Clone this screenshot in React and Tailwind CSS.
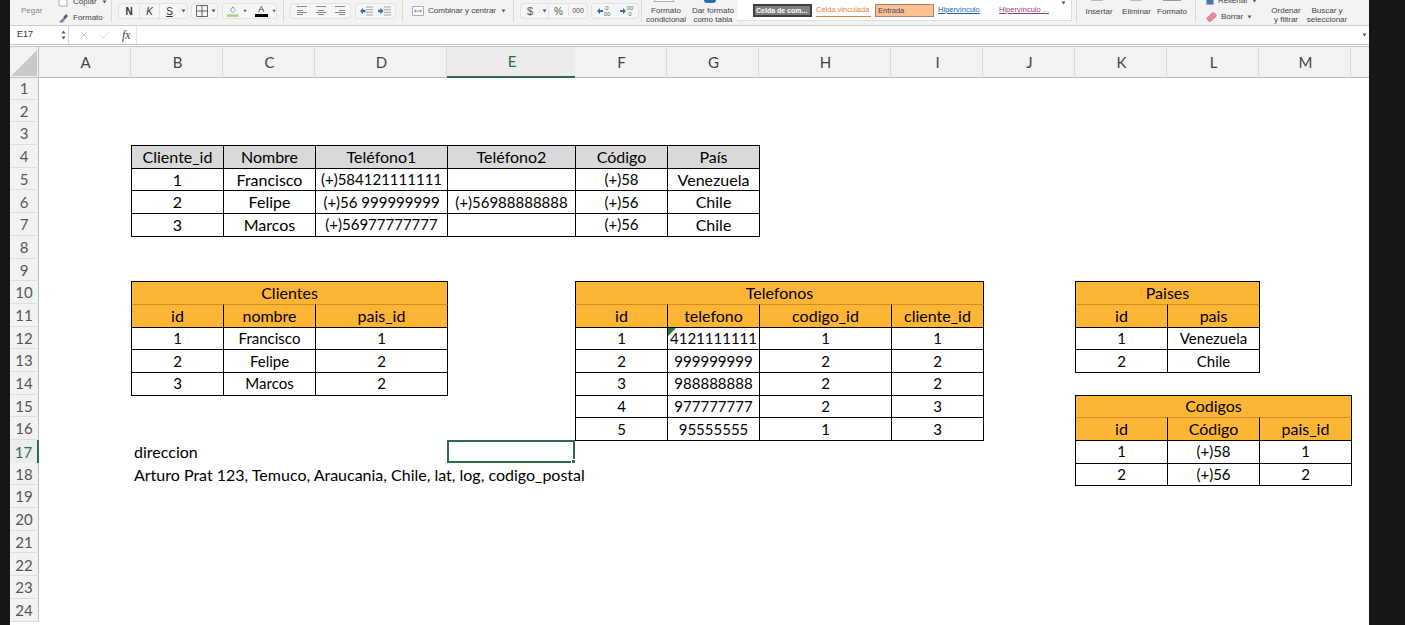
const sheetFont = { fontFamily: 'Lato, sans-serif' }

const columns = ['A', 'B', 'C', 'D', 'E', 'F', 'G', 'H', 'I', 'J', 'K', 'L', 'M']
const rowNumbers = Array.from({ length: 24 }, (_, i) => i + 1)

const Sep = ({ className = '' }) => <div className={`h-[22px] w-px shrink-0 bg-[#d9d9d9] ${className}`} />

const Caret = ({ className = '' }) => (
	<svg width="5" height="4" viewBox="0 0 5 4" className={className}>
		<path d="M0.5 0.5h4L2.5 3.5z" fill="#555" />
	</svg>
)

const Lines = ({ align }) => {
	const short = { left: 'M1 5.5h6M1 9.5h6', center: 'M3 5.5h6M3 9.5h6', right: 'M5 5.5h6M5 9.5h6' }
	return (
		<svg width="12" height="12" viewBox="0 0 12 12">
			<path d="M1 1.5h10M1 7.5h10" stroke="#8a8a8a" strokeWidth="1" />
			<path d={short[align]} stroke="#8a8a8a" strokeWidth="1" />
		</svg>
	)
}

const Indent = ({ flip }) => (
	<svg width="13" height="10" viewBox="0 0 13 10">
		<path d="M6 1h7M6 3.7h7M6 6.3h7M6 9h7" stroke="#9a9a9a" strokeWidth="0.9" />
		{flip ? <path d="M0 3.8h2.5V2L5.5 5 2.5 8V6.2H0z" fill="#2f6fb5" /> : <path d="M5.5 3.8H3V2L0 5l3 3V6.2h2.5z" fill="#2f6fb5" />}
	</svg>
)

const Group = ({ className = '', children }) => (
	<div className={`flex h-[16px] shrink-0 items-center rounded-[3px] border border-[#e3e3e3] bg-[#f6f6f6] ${className}`}>{children}</div>
)

const Decimal = ({ top, bottom, flip }) => (
	<div className="flex w-1/2 items-center justify-center gap-px text-[6px] leading-[6px] text-[#666]">
		<svg width="6" height="6" viewBox="0 0 6 6">
			{flip ? <path d="M0 2h3V0l3 3-3 3V4H0z" fill="#2f6fb5" /> : <path d="M6 2H3V0L0 3l3 3V4h3z" fill="#2f6fb5" />}
		</svg>
		<div className="flex flex-col items-center">
			<span>{top}</span>
			<span>{bottom}</span>
		</div>
	</div>
)

const BigLabel = ({ width, className = '', children, top }) => (
	<div className={`relative flex shrink-0 flex-col items-center whitespace-nowrap pt-[6px] text-[8px] leading-[9px] text-[#444] ${width} ${className}`}>
		{top}
		{children}
	</div>
)

const Ribbon = () => (
	<div className="flex h-[26px] overflow-hidden border-b border-[#cfcfcf] bg-[#f3f3f3] pt-[3px]" style={{ fontFamily: '"Liberation Sans", sans-serif' }}>
		<div className="w-[48px] shrink-0 pl-[11px] pt-[4px] text-[8px] leading-[8px] text-[#888]">Pegar</div>
		<div className="-mt-[6px] flex w-[53px] shrink-0 flex-col gap-[6px] text-[8px] leading-[8px] text-[#444]">
			<div className="flex items-center gap-[5px]">
				<svg width="10" height="10" viewBox="0 0 10 10" className="shrink-0">
					<path d="M1 1h5l3 3v5H1z" fill="#fff" stroke="#999" strokeWidth="0.8" />
				</svg>
				<span>Copiar</span>
				<Caret />
			</div>
			<div className="flex items-center gap-[4px]">
				<svg width="11" height="10" viewBox="0 0 11 10" className="shrink-0">
					<path d="M1 9l4-4 2 2-3 3z" fill="#7d8a99" />
					<path d="M5 4.500l3-3.500 2 2-3 3.500z" fill="#4f5f73" />
				</svg>
				<span>Formato</span>
			</div>
		</div>
		<Sep className="-mt-[3px]" />
		<Group className="ml-[6px] w-[70px] text-[10px] text-[#333]">
			<div className="w-[20px] text-center font-bold">N</div>
			<div className="w-[20px] border-l border-[#e3e3e3] text-center italic">K</div>
			<div className="w-[20px] border-l border-[#e3e3e3] text-center underline">S</div>
			<div className="flex w-[8px] justify-center border-l border-[#e3e3e3]">
				<Caret />
			</div>
		</Group>
		<Group className="ml-[3px] w-[27px] gap-[3px] pl-[4px]">
			<svg width="12" height="12" viewBox="0 0 12 12">
				<path d="M0.500 0.500h11v11h-11zM6 0.500v11M0.500 6h11" fill="none" stroke="#444" strokeWidth="0.8" />
			</svg>
			<Caret />
		</Group>
		<Group className="ml-[4px] w-[55px] pl-[4px]">
			<svg width="14" height="14" viewBox="0 0 14 14">
				<path d="M4 6l3-4 3 4-3 3z" fill="#fff" stroke="#3b7fc4" strokeWidth="0.9" />
				<rect x="0" y="11" width="14" height="3" fill="#a9d18e" />
			</svg>
			<Caret className="ml-[4px]" />
			<div className="ml-[8px] flex w-[13px] flex-col items-center text-[9px] leading-[9px] text-[#333]">
				<span>A</span>
				<div className="h-[3px] w-[13px] bg-black" />
			</div>
			<Caret className="ml-[4px]" />
		</Group>
		<Sep className="-mt-[3px] ml-[6px]" />
		<Group className="ml-[6px] w-[61px] justify-around px-[1px]">
			<Lines align="left" />
			<Lines align="center" />
			<Lines align="right" />
		</Group>
		<Group className="ml-[4px] w-[41px] justify-around px-[2px]">
			<Indent />
			<Indent flip />
		</Group>
		<Sep className="-mt-[3px] ml-[6px]" />
		<div className="ml-[9px] flex h-[16px] w-[101px] shrink-0 items-center text-[8px] text-[#444]">
			<svg width="12" height="12" viewBox="0 0 12 12" className="mr-[4px] shrink-0">
				<path d="M0.500 1.500h11v9h-11z" fill="#fff" stroke="#999" strokeWidth="0.8" />
				<path d="M2.500 6h7M2.500 6l1.500-1.200M2.500 6l1.500 1.200M9.500 6L8 4.800M9.500 6L8 7.200" stroke="#3b7fc4" strokeWidth="0.8" fill="none" />
			</svg>
			<span className="whitespace-nowrap">Combinar y centrar</span>
			<Caret className="ml-[5px]" />
		</div>
		<Sep className="-mt-[3px]" />
		<Group className="ml-[6px] w-[68px] text-[#555]">
			<div className="w-[18px] text-center text-[11px]">$</div>
			<div className="flex w-[9px] justify-center border-l border-[#e3e3e3]">
				<Caret />
			</div>
			<div className="w-[20px] border-l border-[#e3e3e3] text-center text-[10px]">%</div>
			<div className="w-[19px] border-l border-[#e3e3e3] text-center text-[7px]">000</div>
		</Group>
		<Group className="ml-[3px] w-[48px]">
			<Decimal top="0" bottom="00" />
			<Decimal top="00" bottom="0" flip />
		</Group>
		<Sep className="-mt-[3px] ml-[2px]" />
		<BigLabel width="w-[48px]" className="-mt-[3px]" top={<div className="absolute left-[12px] top-0 h-[2px] w-[20px] border-x border-b border-[#aaa] bg-white" />}>
			<span>Formato</span>
			<span>condicional</span>
		</BigLabel>
		<BigLabel width="w-[46px]" className="-mt-[3px]" top={<div className="absolute left-[14px] top-0 h-[3px] w-[12px] rounded-b-full bg-[#2e6cb0]" />}>
			<span>Dar formato</span>
			<span>como tabla</span>
		</BigLabel>
		<div className="-mt-[3px] ml-[1px] flex h-[21px] w-[335px] shrink-0 items-start border-b border-r border-[#dcdcdc] bg-white pl-[16px] pt-[4px] text-[7.500px] leading-[12px]">
			<div className="h-[13px] w-[59px] shrink-0 truncate border-2 border-[#3f3f3f] bg-[#7f7f7f] px-px text-[7px] leading-[9px] font-bold text-white">Celda de com...</div>
			<div className="ml-[4px] w-[55px] shrink-0 whitespace-nowrap border-b border-[#e8833a] text-[#e8833a]">Celda vinculada</div>
			<div className="ml-[4px] h-[13px] w-[59px] shrink-0 border border-[#a9846a] bg-[#fbc08f] pl-[2px] text-[#3f3f76]">Entrada</div>
			<div className="ml-[4px] w-[43px] shrink-0 text-[#1f5fb0] underline">Hipervínculo</div>
			<div className="ml-[18px] w-[51px] shrink-0 whitespace-nowrap text-[#8f3f7c] underline">Hipervínculo ...</div>
			<Caret className="ml-[11px] -mt-[3px]" />
		</div>
		<Sep className="-mt-[3px] ml-[4px]" />
		<BigLabel width="w-[44px]" className="-mt-[3px] pt-[7px]" top={<div className="absolute left-[14px] top-0 h-px w-[12px] bg-[#bbb]" />}>
			<span>Insertar</span>
		</BigLabel>
		<BigLabel width="w-[31px]" className="-mt-[3px] pt-[7px]" top={<div className="absolute left-[9px] top-0 h-px w-[12px] bg-[#bbb]" />}>
			<span>Eliminar</span>
		</BigLabel>
		<BigLabel width="w-[40px]" className="-mt-[3px] pt-[7px]" top={<div className="absolute left-[11px] top-0 h-px w-[18px] bg-[#999]" />}>
			<span>Formato</span>
		</BigLabel>
		<Sep className="-mt-[3px] ml-[3px]" />
		<div className="-mt-[6px] ml-[10px] flex w-[62px] shrink-0 flex-col gap-[7px] text-[8px] leading-[8px] text-[#444]">
			<div className="flex items-center gap-[4px]">
				<div className="h-[8px] w-[8px] rounded-[1px] border border-[#aaa] bg-[#3f78bd]" />
				<span>Rellenar</span>
				<Caret />
			</div>
			<div className="flex items-center gap-[4px]">
				<svg width="11" height="10" viewBox="0 0 11 10" className="shrink-0">
					<path d="M0.500 6.500L6 1a1.500 1.500 0 0 1 2 0l2 1.500a1.500 1.500 0 0 1 0 2L4.500 9.500H3z" fill="#e98a9a" stroke="#b85f70" strokeWidth="0.5" />
				</svg>
				<span>Borrar</span>
				<Caret />
			</div>
		</div>
		<BigLabel width="w-[36px]" className="-mt-[3px]">
			<span>Ordenar</span>
			<span>y filtrar</span>
		</BigLabel>
		<BigLabel width="w-[46px]" className="-mt-[3px]">
			<span>Buscar y</span>
			<span>seleccionar</span>
		</BigLabel>
	</div>
)

const FormulaBar = () => (
	<div className="flex h-[19px] items-stretch border-b border-[#c4c4c4] bg-white">
		<div className="flex w-[59px] shrink-0 items-center justify-between border-r border-[#d5d5d5] pl-[7px] pr-[2px] text-[9px] text-[#333]" style={{ fontFamily: '"Liberation Sans", sans-serif' }}>
			<span>E17</span>
			<div className="flex flex-col gap-[2px]">
				<Caret className="rotate-180" />
				<Caret />
			</div>
		</div>
		<div className="flex w-[68px] shrink-0 items-center border-r border-[#e5e5e5] pl-[11px]">
			<svg width="8" height="8" viewBox="0 0 8 8">
				<path d="M1 1l6 6M7 1L1 7" stroke="#cfcfcf" strokeWidth="1" />
			</svg>
			<svg width="11" height="8" viewBox="0 0 11 8" className="ml-[11px]">
				<path d="M1 4l3 3 6-6" fill="none" stroke="#d5d5d5" strokeWidth="1" />
			</svg>
			<span className="ml-[12px] text-[12px] italic text-[#444]" style={{ fontFamily: '"Liberation Serif", serif' }}>fx</span>
		</div>
		<div className="flex flex-1 items-center justify-end pr-[2px]">
			<Caret />
		</div>
	</div>
)

const Cell = ({ className = '', bg = 'bg-white', children }) => {
	const numeric = /^[(+)\d ]{5,}$/.test(children?.toString?.() ?? '') || Array.isArray(children)
	return (
		<div
			className={`relative -mb-px -mr-px flex items-center justify-center whitespace-nowrap border border-black leading-none text-black ${numeric ? 'text-[15px]' : 'text-[16px]'} ${bg} ${className}`}
		>
			{children}
		</div>
	)
}

const topRows = [
	['1', 'Francisco', '(+)584121111111', '', '(+)58', 'Venezuela'],
	['2', 'Felipe', '(+)56 999999999', '(+)56988888888', '(+)56', 'Chile'],
	['3', 'Marcos', '(+)56977777777', '', '(+)56', 'Chile'],
]

const Table = ({ place, title, titleSpan, head, rows, marker }) => (
	<div className={`z-10 grid grid-cols-subgrid grid-rows-subgrid ${place}`}>
		<Cell bg="bg-[#fdb535]" className={titleSpan}>
			{title}
		</Cell>
		{head.map((h) => (
			<Cell key={h} bg="bg-[#fdb535]" className="border-t-[#c98f26]">
				{h}
			</Cell>
		))}
		{rows.flat().map((v, i) => (
			<Cell key={i}>
				{marker && i === 1 && <div className="absolute left-0 top-0 h-0 w-0 border-r-[8px] border-t-[8px] border-r-transparent border-t-[#1f7a3d]" />}
				{v}
			</Cell>
		))}
	</div>
)

const Sheet = () => (
	<div
		className="grid flex-1 grid-cols-[29px_92px_92px_92px_132px_128px_92px_92px_132px_92px_92px_92px_92px_92px_18px] grid-rows-[30px_repeat(24,22.7px)] bg-white"
		style={sheetFont}
	>
		<div className="z-[5] -mb-px flex items-end justify-end border-b border-r border-[#bdbdbd] bg-[#f2f2f2] p-[1px]">
			<div className="h-0 w-0 border-b-[26px] border-l-[26px] border-b-[#c9c9c9] border-l-transparent" />
		</div>
		{columns.map((c) => (
			<div
				key={c}
				className={
					c === 'E'
						? 'z-[5] -mb-px flex items-center justify-center border-b-2 border-[#2e6b4a] bg-[#ececec] pl-[2px] text-[15px] text-[#2e6b4a]'
						: 'z-[5] -mb-px flex items-center justify-center border-b border-r border-b-[#bdbdbd] border-r-[#dcdcdc] bg-[#f2f2f2] pl-[2px] text-[15px] text-[#444]'
				}
			>
				{c}
			</div>
		))}
		<div className="z-[5] -mb-px border-b border-[#bdbdbd] bg-[#f2f2f2]" />
		{rowNumbers.map((n) => (
			<div
				key={n}
				className={
					n === 17
						? 'col-start-1 flex items-center justify-center border-r-2 border-[#2e6b4a] bg-[#ececec] pt-px text-[15px] text-[#2e6b4a]'
						: 'col-start-1 flex items-center justify-center border-b border-r border-b-[#dedede] border-r-[#bdbdbd] bg-[#f2f2f2] pt-px text-[15px] text-[#555]'
				}
			>
				{n}
			</div>
		))}

		<div className="z-10 col-start-3 col-end-9 row-start-5 row-end-9 grid grid-cols-subgrid grid-rows-subgrid">
			{['Cliente_id', 'Nombre', 'Teléfono1', 'Teléfono2', 'Código', 'País'].map((h) => (
				<Cell key={h} bg="bg-[#d9d9d9]">
					{h}
				</Cell>
			))}
			{topRows.flat().map((v, i) => (
				<Cell key={i}>{v}</Cell>
			))}
		</div>

		<Table
			place="col-start-3 col-end-6 row-start-11 row-end-16"
			title="Clientes"
			titleSpan="col-span-3"
			head={['id', 'nombre', 'pais_id']}
			rows={[
				['1', 'Francisco', '1'],
				['2', 'Felipe', '2'],
				['3', 'Marcos', '2'],
			]}
		/>
		<Table
			place="col-start-7 col-end-11 row-start-11 row-end-18"
			title="Telefonos"
			titleSpan="col-span-4"
			head={['id', 'telefono', 'codigo_id', 'cliente_id']}
			marker
			rows={[
				['1', '4121111111', '1', '1'],
				['2', '999999999', '2', '2'],
				['3', '988888888', '2', '2'],
				['4', '977777777', '2', '3'],
				['5', '95555555', '1', '3'],
			]}
		/>
		<Table
			place="col-start-12 col-end-14 row-start-11 row-end-15"
			title="Paises"
			titleSpan="col-span-2"
			head={['id', 'pais']}
			rows={[
				['1', 'Venezuela'],
				['2', 'Chile'],
			]}
		/>
		<Table
			place="col-start-12 col-end-15 row-start-16 row-end-20"
			title="Codigos"
			titleSpan="col-span-3"
			head={['id', 'Código', 'pais_id']}
			rows={[
				['1', '(+)58', '1'],
				['2', '(+)56', '2'],
			]}
		/>

		<div className="col-start-3 row-start-18 flex items-center whitespace-nowrap pl-[3px] pt-px text-[16px] leading-none text-black">direccion</div>
		<div className="relative col-start-6 row-start-18 border-2 border-[#2e6b4a]">
			<div className="absolute -bottom-[3px] -right-[3px] h-[5px] w-[5px] border border-white bg-[#2e6b4a]" />
		</div>
		<div className="col-start-3 row-start-19 flex items-center whitespace-nowrap pl-[3px] pt-px text-[16px] leading-none text-black">
			Arturo Prat 123, Temuco, Araucania, Chile, lat, log, codigo_postal
		</div>
	</div>
)

const App = () => (
	<div className="flex h-[625px] w-[1405px] overflow-hidden bg-[#161616]">
		<div className="ml-[10px] flex h-[625px] w-[1359px] flex-col overflow-hidden bg-[#f3f3f3]">
			<Ribbon />
			<FormulaBar />
			<div className="h-[2px] shrink-0 border-b border-[#c4c4c4] bg-white" />
			<Sheet />
		</div>
	</div>
)

export default App
